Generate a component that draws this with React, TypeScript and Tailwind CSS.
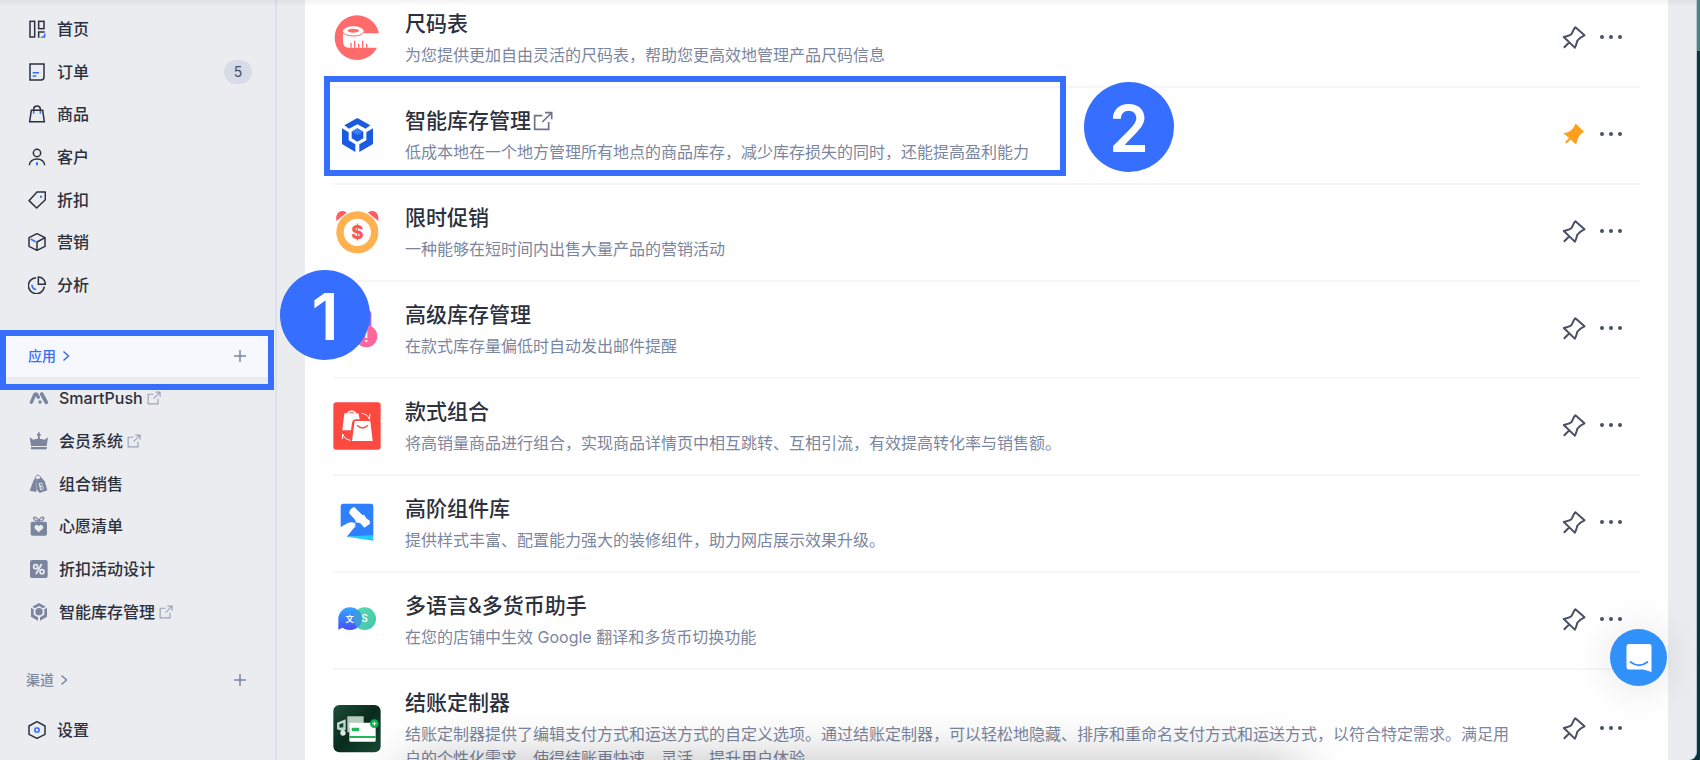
import type { ReactNode } from "react";

const INK = "#2b303d";
const BLUE = "#356dff";
const MUTED = "#7b869e";

function NavSvg({ children }: { children: ReactNode }) {
  return (
    <svg viewBox="0 0 54 54" className="size-[18px] shrink-0" fill="none" stroke={INK} strokeWidth="4.500" aria-hidden="true">
      {children}
    </svg>
  );
}

const HomeIcon = () => (
  <NavSvg>
    <rect x="6" y="4" width="14" height="47" />
    <rect x="32" y="4" width="16" height="22" />
    <path d="M32 53V36H50" />
    <path d="M51 40v12H38c8-1 12-5 13-12Z" fill={BLUE} stroke={BLUE} strokeWidth="2" />
  </NavSvg>
);
const OrderIcon = () => (
  <NavSvg>
    <path d="M6 3H48V42a9 9 0 0 1-9 9H6Z" />
    <path d="M14 29H33M14 39H25" stroke={BLUE} />
  </NavSvg>
);
const BagIcon = () => (
  <NavSvg>
    <path d="M10 16H44L49 50H5Z" />
    <path d="M17 16v-3a10 10 0 0 1 20 0v3" />
    <path d="M17 18v8M37 18v8" stroke={BLUE} />
  </NavSvg>
);
const UserIcon = () => (
  <NavSvg>
    <circle cx="27" cy="15" r="11" />
    <path d="M4 52C4 27 50 27 50 52" />
    <path d="M27 43v9" stroke={BLUE} strokeWidth="6" />
  </NavSvg>
);
const TagIcon = () => (
  <NavSvg>
    <path d="M27 3H52V26L26 51L3 29Z" strokeLinejoin="round" />
    <path d="M36 17h6" stroke={BLUE} strokeWidth="6" />
  </NavSvg>
);
const CubeIcon = () => (
  <NavSvg>
    <path d="M27 2L51 14V40L27 52L3 40V14ZM51 14L27 27V52" strokeLinejoin="round" />
    <path d="M8 18L23 26" stroke={BLUE} strokeWidth="5" />
  </NavSvg>
);
const PieIcon = () => (
  <NavSvg>
    <path d="M31 3a21 21 0 0 1 21 22H31Z" />
    <path d="M24 5A24 24 0 1 0 49 32" />
    <path d="M12 26c0 8 5 13 12 14" stroke={BLUE} strokeWidth="5" />
  </NavSvg>
);
const SettingsIcon = () => (
  <NavSvg>
    <path d="M27 2L51 15V40L27 52L3 40V15Z" strokeLinejoin="round" />
    <rect x="21" y="21" width="12" height="12" rx="4" stroke={BLUE} strokeWidth="5" />
  </NavSvg>
);

function AppSvg({ children }: { children: ReactNode }) {
  return (
    <svg viewBox="0 0 60 60" className="size-5 shrink-0" fill={MUTED} aria-hidden="true">
      {children}
    </svg>
  );
}

const SmartPushIcon = () => (
  <AppSvg>
    <path d="M7 43L17 20Q20 15 24 20L28 28" fill="none" stroke={MUTED} strokeWidth="10" strokeLinecap="round" />
    <path d="M38 18L52 43" stroke={MUTED} strokeWidth="11" strokeLinecap="round" />
    <circle cx="33" cy="42" r="5" />
  </AppSvg>
);
const CrownIcon = () => (
  <AppSvg>
    <path d="M2 19L13 26L20 24H26L27 14H24V9H27V4H32V9H35V14H32L33 24H38L46 26L57 19L53 45H6Z" />
    <path d="M6 48H53V55H6Z" />
  </AppSvg>
);
const BundleIcon = () => (
  <AppSvg>
    <path d="M14 18L24 13L22 54L2 50Z" />
    <path d="M24 16L38 11L47 22L55 49L32 57L23 46Z" />
    <path d="M17 20C18 -2 36 -2 37 20" fill="none" stroke={MUTED} strokeWidth="3" />
    <path d="M31 28l4 20M31 28c10-4 12 7 2 10c11-3 14 7 3 10" fill="none" stroke="#ebecf0" strokeWidth="3" />
  </AppSvg>
);
const WishIcon = () => (
  <AppSvg>
    <rect x="5" y="17" width="49" height="42" rx="5" />
    <path d="M29 16C10 14 12 0 20 4Q27 7 29 16Q31 7 38 4C47 0 48 14 29 16" fill="none" stroke={MUTED} strokeWidth="4" />
    <path d="M29 49L18 38C12 30 24 22 29 31C34 22 47 30 41 38Z" fill="#ebecf0" />
  </AppSvg>
);
const PercentIcon = () => (
  <AppSvg>
    <rect x="3" y="3" width="53" height="54" rx="6" />
    <g fill="none" stroke="#ebecf0" strokeWidth="5">
      <circle cx="20" cy="23" r="6" />
      <circle cx="39" cy="38" r="6" />
      <path d="M38 15L21 45" />
    </g>
  </AppSvg>
);
const InventoryIcon = () => (
  <AppSvg>
    <path d="M30 3L50 14L42 19L30 12L18 19L10 14Z" />
    <path d="M6 17L14 22V38L27 46V56L6 44Z" />
    <path d="M54 17L46 22V38L33 46V56L54 44Z" />
    <circle cx="30" cy="29" r="11" />
  </AppSvg>
);

function ExternalIcon({ className }: { className: string }) {
  return (
    <svg viewBox="0 0 60 60" className={className} fill="none" stroke="currentColor" strokeWidth="5" aria-hidden="true">
      <path d="M28 14H5V55H47V33" />
      <path d="M36 5H56V25M55 6L28 33" />
    </svg>
  );
}

function PinIcon({ filled }: { filled?: boolean }) {
  return filled ? (
    <svg viewBox="0 0 24 24" className="size-6" fill="#ff9f1a" aria-hidden="true">
      <path d="M13.6 1.5L22 9.8C17.500 12.500 16 15 14.200 22.600L8.500 17.500L4.500 21.500L3 20L7 16L1.300 11.200C8 10.500 11.500 7 13.600 1.500Z" />
    </svg>
  ) : (
    <svg viewBox="0 0 24 24" className="size-6" fill="none" stroke="#4a5163" strokeWidth="2" strokeLinejoin="round" aria-hidden="true">
      <path d="M13.400 2.200L22.500 10.300C19.500 11.600 17.500 12.800 15.500 15.500C14.600 17.500 14.500 20 12.800 22.600L1.800 12C4 11 7 11.200 9 9.500C11 7.500 10.800 4.500 13.400 2.200ZM7.300 17.200L1.800 22.800" />
    </svg>
  );
}

function AppIconSvg({ children }: { children: ReactNode }) {
  return (
    <svg viewBox="0 0 144 144" className="size-12 shrink-0" aria-hidden="true">
      {children}
    </svg>
  );
}

const SizeChartArt = () => (
  <AppIconSvg>
    <circle cx="72" cy="71" r="67" fill="#ff6b6b" />
    <path d="M30 50V84Q30 101 48 101H144V58H92V50Z" fill="#fff" />
    <ellipse cx="61" cy="51" rx="31" ry="14" fill="#fff" />
    <path d="M30 54C34 70 88 70 92 54" fill="none" stroke="#ff6b6b" strokeWidth="3" />
    <ellipse cx="61" cy="50" rx="17" ry="6" fill="#ff6b6b" />
    <path d="M54 101V86M65 101V80M77 101V89M89 101V80M101 101V89" stroke="#ff6b6b" strokeWidth="4" />
  </AppIconSvg>
);
const InventoryArt = () => (
  <AppIconSvg>
    <g fill="#1b5be0">
      <path d="M73 21L112 43L98 53L73 40L48 53L34 43Z" />
      <path d="M27 52L47 64V88L67 100V123L27 99Z" />
      <path d="M120 52L100 64V88L79 100V123L120 99Z" />
    </g>
    <path d="M73 52L91 62V82L73 92L56 82V62Z" fill="#1b5be0" />
    <path d="M73 52L91 62L73 72L56 62Z" fill="#3b7bff" />
  </AppIconSvg>
);
const FlashArt = () => (
  <AppIconSvg>
    <path d="M10 39C6 8 30 4 41 14ZM136 39C140 8 116 4 105 14Z" fill="#ff5d61" />
    <circle cx="73" cy="73" r="63" fill="#ffb04f" />
    <circle cx="73" cy="73" r="41" fill="#fff" />
    <text x="73" y="93" textAnchor="middle" fontSize="56" fontWeight="800" fill="#ff5555" fontFamily="Inter, sans-serif">$</text>
  </AppIconSvg>
);
const StockArt = () => (
  <AppIconSvg>
    <rect x="12" y="16" width="103" height="96" rx="12" fill="#8f6bff" />
    <circle cx="100" cy="94" r="33" fill="#ff6699" />
    <path d="M100 76V99M100 105V111" stroke="#fff" strokeWidth="6" />
  </AppIconSvg>
);
const VariantArt = () => (
  <AppIconSvg>
    <rect x="1" y="1" width="142" height="142" rx="9" fill="#fd4a40" />
    <path d="M34 34H76L80 52H66Q58 54 57 62L54 85H28Z" fill="#fff" />
    <path d="M45 34Q47 27 55 28Q65 27 67 34" fill="none" stroke="#fff" strokeWidth="5" />
    <path d="M65 57H112L119 117H57Z" fill="#fff" />
    <path d="M72 70Q88 86 105 70" fill="none" stroke="#fd4a40" strokeWidth="4" />
    <path d="M86 34Q104 36 109 52L111 36M53 115Q34 112 29 96L28 111" fill="none" stroke="#fff" strokeWidth="3" />
  </AppIconSvg>
);
const WidgetArt = () => (
  <AppIconSvg>
    <path d="M31 14H114Q121 14 121 21V112L41 113L35 100L23 84V22Q23 14 31 14Z" fill="#2f80ff" />
    <path d="M41 113L121 108V125Z" fill="#22ccff" />
    <path d="M48 42Q50 28 64 24L87 47L94 48L99 57L110 65L111 74L94 86L82 73L69 70L66 62Z" fill="#fff" />
    <path d="M22 85L43 73Q57 66 66 74L65 84L41 114H22Z" fill="#fff" />
    <path d="M66 70V86" stroke="#fff" strokeWidth="2" />
  </AppIconSvg>
);
const LanguageArt = () => (
  <AppIconSvg>
    <defs>
      <linearGradient id="lang" x1="0" y1="0" x2="0" y2="1">
        <stop offset="0" stopColor="#35a8ff" />
        <stop offset="1" stopColor="#4650fa" />
      </linearGradient>
      <linearGradient id="money" x1="0" y1="0" x2="1" y2="1">
        <stop offset="0" stopColor="#5bdcae" />
        <stop offset="1" stopColor="#40c4ae" />
      </linearGradient>
    </defs>
    <circle cx="95" cy="68" r="34" fill="url(#money)" />
    <path d="M16 68A35 34 0 1 1 51 102Q38 102 28 95L16 101Z" fill="url(#lang)" />
    <path d="M74 41A34 34 0 0 1 74 94A34 34 0 0 1 74 41Z" fill="#3d9cd9" />
    <text x="50" y="77" textAnchor="middle" fontSize="25" fontWeight="700" fill="#fff" fontFamily="'Noto Sans CJK SC', sans-serif">文</text>
    <text x="95" y="79" textAnchor="middle" fontSize="29" fontWeight="600" fill="#fff" fontFamily="Inter, sans-serif">S</text>
  </AppIconSvg>
);
const CheckoutArt = () => (
  <AppIconSvg>
    <defs>
      <linearGradient id="forest" x1="0" y1="0" x2="1" y2="1">
        <stop offset="0" stopColor="#1e4c39" />
        <stop offset="0.500" stopColor="#082b1c" />
        <stop offset="1" stopColor="#194b36" />
      </linearGradient>
    </defs>
    <rect x="1" y="0" width="142" height="142" rx="18" fill="url(#forest)" />
    <path d="M12 53L38 43V74L30 79L12 73Z" fill="#c2d6c9" />
    <path d="M19 58L31 54V67L20 68Z" fill="#174331" />
    <circle cx="30" cy="84" r="8" fill="#dcebe0" />
    <path d="M43 34H92V68H49V82H43Z" fill="#b7ccbd" />
    <rect x="49" y="53" width="79" height="57" rx="3" fill="#fff" />
    <rect x="56" y="68" width="23" height="11" rx="3" fill="#22b75b" />
    <path d="M49 96H128" stroke="#22b75b" strokeWidth="6" />
    <circle cx="124" cy="56" r="13" fill="#12b052" />
    <path d="M118 56H130M124 50V62" stroke="#fff" strokeWidth="3" />
  </AppIconSvg>
);

const NAV = [
  { label: "首页", icon: <HomeIcon /> },
  { label: "订单", icon: <OrderIcon />, count: 5 },
  { label: "商品", icon: <BagIcon /> },
  { label: "客户", icon: <UserIcon /> },
  { label: "折扣", icon: <TagIcon /> },
  { label: "营销", icon: <CubeIcon /> },
  { label: "分析", icon: <PieIcon /> },
];

const PINNED = [
  { label: "SmartPush", icon: <SmartPushIcon />, external: true },
  { label: "会员系统", icon: <CrownIcon />, external: true },
  { label: "组合销售", icon: <BundleIcon /> },
  { label: "心愿清单", icon: <WishIcon /> },
  { label: "折扣活动设计", icon: <PercentIcon /> },
  { label: "智能库存管理", icon: <InventoryIcon />, external: true },
];

const APPS = [
  { title: "尺码表", text: "为您提供更加自由灵活的尺码表，帮助您更高效地管理产品尺码信息", art: <SizeChartArt /> },
  {
    title: "智能库存管理",
    text: "低成本地在一个地方管理所有地点的商品库存，减少库存损失的同时，还能提高盈利能力",
    art: <InventoryArt />,
    external: true,
    pinned: true,
  },
  { title: "限时促销", text: "一种能够在短时间内出售大量产品的营销活动", art: <FlashArt /> },
  { title: "高级库存管理", text: "在款式库存量偏低时自动发出邮件提醒", art: <StockArt /> },
  { title: "款式组合", text: "将高销量商品进行组合，实现商品详情页中相互跳转、互相引流，有效提高转化率与销售额。", art: <VariantArt /> },
  { title: "高阶组件库", text: "提供样式丰富、配置能力强大的装修组件，助力网店展示效果升级。", art: <WidgetArt /> },
  { title: "多语言&多货币助手", text: "在您的店铺中生效 Google 翻译和多货币切换功能", art: <LanguageArt /> },
  {
    title: "结账定制器",
    text: "结账定制器提供了编辑支付方式和运送方式的自定义选项。通过结账定制器，可以轻松地隐藏、排序和重命名支付方式和运送方式，以符合特定需求。满足用户的个性化需求，使得结账更快速、灵活，提升用户体验",
    art: <CheckoutArt />,
  },
];

function SectionHeader({ label, active }: { label: string; active?: boolean }) {
  return (
    <div className={active ? "flex h-[42px] items-center justify-between bg-[#f7f8fd] pl-7 pr-[29px]" : "flex h-[42px] items-center justify-between pl-[26px] pr-[29px]"}>
      <a href="#" className={active ? "flex items-center gap-1.5 text-sm text-[#356dff]" : "flex items-center gap-1.5 text-sm text-[#7b869e]"}>
        {label}
        <svg viewBox="0 0 8 12" className="h-3 w-2" fill="none" stroke="currentColor" strokeWidth="1.500" aria-hidden="true">
          <path d="M1.500 1.500L6.500 6L1.500 10.500" />
        </svg>
      </a>
      <button type="button" aria-label={`添加${label}`} className="text-[#7b869e]">
        <svg viewBox="0 0 12 12" className="size-3" stroke="currentColor" strokeWidth="1.500" aria-hidden="true">
          <path d="M0 6H12M6 0V12" />
        </svg>
      </button>
    </div>
  );
}

function Sidebar() {
  return (
    <nav className="flex w-[277px] shrink-0 flex-col border-r-2 border-[#dadfec] pt-2 text-base font-medium text-[#2b303d]">
      <ul className="grid h-[298px] auto-rows-fr">
        {NAV.map((item) => (
          <li key={item.label} className="flex items-center justify-between pl-7 pr-[23px]">
            <a href="#" className="flex items-center gap-[11px]">
              {item.icon}
              {item.label}
            </a>
            {item.count && (
              <span className="flex h-6 w-7 items-center justify-center rounded-full bg-[#d7dbe8] text-sm font-normal text-[#474f63]">
                {item.count}
              </span>
            )}
          </li>
        ))}
      </ul>
      <div className="mt-[29px]">
        <SectionHeader label="应用" active />
      </div>
      <ul className="grid h-[256px] auto-rows-fr">
        {PINNED.map((item) => (
          <li key={item.label} className="flex items-center pl-[29px]">
            <a href="#" className="flex items-center">
              {item.icon}
              <span className="ml-2.5">{item.label}</span>
              {item.external && <ExternalIcon className="ml-1 size-[14px] text-[#9aa3b8]" />}
            </a>
          </li>
        ))}
      </ul>
      <div className="mt-[26px]">
        <SectionHeader label="渠道" />
      </div>
      <a href="#" className="mt-2 flex h-[42px] items-center gap-[11px] pl-7">
        <SettingsIcon />
        设置
      </a>
    </nav>
  );
}

function AppList() {
  return (
    <ul className="-mt-[9px] px-7">
      {APPS.map((app) => (
        <li key={app.title} className="flex items-center border-b-2 border-[#f6f6f8] pb-[19px] pt-[17px]">
          {app.art}
          <div className="ml-6 min-w-0 flex-1">
            <h2 className="flex items-center text-[21px] font-medium leading-8 text-[#2b303d]">
              {app.title}
              {app.external && <ExternalIcon className="ml-0.5 size-5 text-[#6b7386]" />}
            </h2>
            <p className="mt-[3px] text-base leading-6 text-[#7b869e]">{app.text}</p>
          </div>
          <div className="ml-12 flex items-center gap-[14px] pb-0.5 pr-[18px]">
            <button type="button" aria-label={`固定${app.title}`}>
              <PinIcon filled={app.pinned} />
            </button>
            <button type="button" aria-label={`更多${app.title}`}>
              <svg viewBox="0 0 22 24" className="h-6 w-[22px]" fill="#4a5163" aria-hidden="true">
                <circle cx="2" cy="12" r="2" />
                <circle cx="11" cy="12" r="2" />
                <circle cx="20" cy="12" r="2" />
              </svg>
            </button>
          </div>
        </li>
      ))}
    </ul>
  );
}

export default function App() {
  return (
    <div lang="zh-CN" className="relative flex h-screen overflow-hidden bg-gradient-to-b from-[#4b8580] from-[51px] to-[#06373b] to-[51px] font-['Inter','Noto_Sans_CJK_SC',sans-serif]">
      <div className="relative mr-[3px] flex min-w-0 flex-1 overflow-hidden rounded-br-lg border-r border-[#b9c8cc] bg-[#ebecf0]">
        <Sidebar />
        <main className="ml-7 mr-7 min-w-0 flex-1 overflow-hidden bg-white">
          <AppList />
        </main>
        <div className="pointer-events-none absolute inset-x-0 top-0 h-1.5 bg-gradient-to-b from-black/5 to-transparent" />
        <div className="pointer-events-none absolute -bottom-12 left-[410px] right-[400px] h-10 rounded-3xl shadow-[0_0_50px_10px_rgba(0,0,0,0.24)]" />
      </div>

      <div className="pointer-events-none absolute left-0 top-[330px] h-[60px] w-[274px] border-6 border-[#366eff]" />
      <div className="pointer-events-none absolute left-[324px] top-[76px] h-[100px] w-[742px] border-6 border-[#366eff]" />
      <div className="absolute left-[280px] top-[270px] flex size-[90px] items-center justify-center rounded-full bg-[#366eff] pt-1 text-[64px] font-semibold text-white">1</div>
      <div className="absolute left-[1084px] top-[82px] flex size-[90px] items-center justify-center rounded-full bg-[#366eff] pt-1 text-[64px] font-semibold text-white">2</div>

      <button type="button" aria-label="在线客服" className="absolute bottom-[74px] right-[33px] flex size-[57px] items-center justify-center rounded-full bg-[#3091fb] shadow-[0_2px_44px_rgba(0,0,0,0.12)]">
        <svg viewBox="0 0 26 30" className="h-[30px] w-[26px]" aria-hidden="true">
          <path d="M3 1H23Q25.500 1 25.500 3.500V29L17.500 26.500H3Q0.500 26.500 0.500 24V3.500Q0.500 1 3 1Z" fill="#fff" />
          <path d="M4.500 19Q13 25.500 21.500 19" fill="none" stroke="#3091fb" strokeWidth="1.800" strokeLinecap="round" />
        </svg>
      </button>
    </div>
  );
}
